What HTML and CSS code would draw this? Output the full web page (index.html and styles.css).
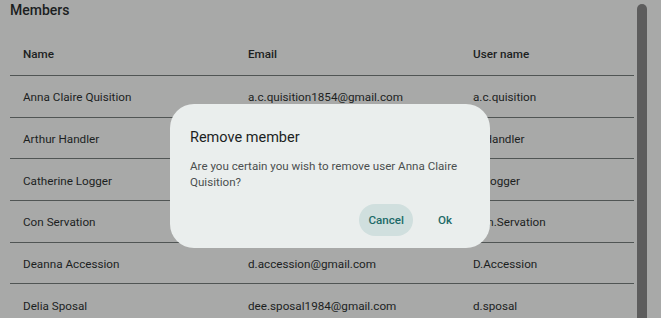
FILE: index.html
```html
<!DOCTYPE html>
<html lang="en">
<head>
<meta charset="UTF-8">
<title>Members</title>
<link rel="stylesheet" href="styles.css">
</head>
<body>
<div class="page">
  <div class="content">
    <h2 class="title">Members</h2>
    <div class="table">
      <div class="row head">
        <div class="cell">Name</div>
        <div class="cell">Email</div>
        <div class="cell">User name</div>
      </div>
      <div class="row">
        <div class="cell">Anna Claire Quisition</div>
        <div class="cell">a.c.quisition1854@gmail.com</div>
        <div class="cell">a.c.quisition</div>
      </div>
      <div class="row">
        <div class="cell">Arthur Handler</div>
        <div class="cell">arthur.handler@gmail.com</div>
        <div class="cell">A.Handler</div>
      </div>
      <div class="row">
        <div class="cell">Catherine Logger</div>
        <div class="cell">cat.logger@gmail.com</div>
        <div class="cell">C.Logger</div>
      </div>
      <div class="row">
        <div class="cell">Con Servation</div>
        <div class="cell">con.servation@gmail.com</div>
        <div class="cell">Con.Servation</div>
      </div>
      <div class="row">
        <div class="cell">Deanna Accession</div>
        <div class="cell">d.accession@gmail.com</div>
        <div class="cell">D.Accession</div>
      </div>
      <div class="row">
        <div class="cell">Delia Sposal</div>
        <div class="cell">dee.sposal1984@gmail.com</div>
        <div class="cell">d.sposal</div>
      </div>
    </div>
  </div>
  <div class="scrollbar"></div>
</div>

<div class="dialog">
  <h3 class="dialog-title">Remove member</h3>
  <p class="dialog-text">Are you certain you wish to remove user Anna Claire Quisition?</p>
  <div class="dialog-actions">
    <button class="btn btn-tonal">Cancel</button>
    <button class="btn">Ok</button>
  </div>
</div>
</body>
</html>
```

FILE: styles.css
```css
body {
  margin: 0;
  background: #a8a9a8;
  font-family: Roboto, "Noto Sans", sans-serif;
  color: #1c1f1f;
  height: 318px;
  overflow: hidden;
}
.page {
  display: flex;
  height: 318px;
}
.content {
  flex: 1;
  padding: 0 3px 0 10px;
}
.title {
  margin: 0;
  font-size: 14px;
  font-weight: 500;
  line-height: 20px;
}
.table {
  margin-top: 13px;
}
.row {
  display: grid;
  grid-template-columns: 225px 225px 1fr;
  height: 41.7px;
  box-sizing: border-box;
  border-bottom: 1px solid #505554;
  align-items: center;
  font-size: 11.7px;
}
.row.head {
  height: 43px;
  font-weight: 500;
}
.cell {
  padding: 2px 0 0 13px;
  white-space: nowrap;
}
.head .cell {
  padding-top: 0;
}
.scrollbar {
  width: 10px;
  margin: 4px 14px 0 0;
  background: #5d5d5d;
  border-radius: 5px 5px 0 0;
}
.dialog {
  position: absolute;
  left: 170px;
  top: 104px;
  width: 320px;
  height: 144px;
  box-sizing: border-box;
  padding: 22px 29px 12px 20px;
  background: #eaeeed;
  border-radius: 24px;
  display: flex;
  flex-direction: column;
}
.dialog-title {
  margin: 0;
  font-size: 14.5px;
  font-weight: 400;
  line-height: 24px;
  color: #1c1f1f;
}
.dialog-text {
  margin: 8px 0 0;
  font-size: 11.6px;
  line-height: 16px;
  color: #4a4f4f;
}
.dialog-actions {
  margin-top: auto;
  display: flex;
  justify-content: flex-end;
  gap: 16px;
}
.btn {
  height: 32px;
  padding: 0 9px;
  border: 0;
  border-radius: 16px;
  background: transparent;
  font-family: Roboto, "Noto Sans", sans-serif;
  font-size: 11.6px;
  font-weight: 500;
  color: #1d6a68;
}
.btn-tonal {
  background: #d0dfde;
}
```
